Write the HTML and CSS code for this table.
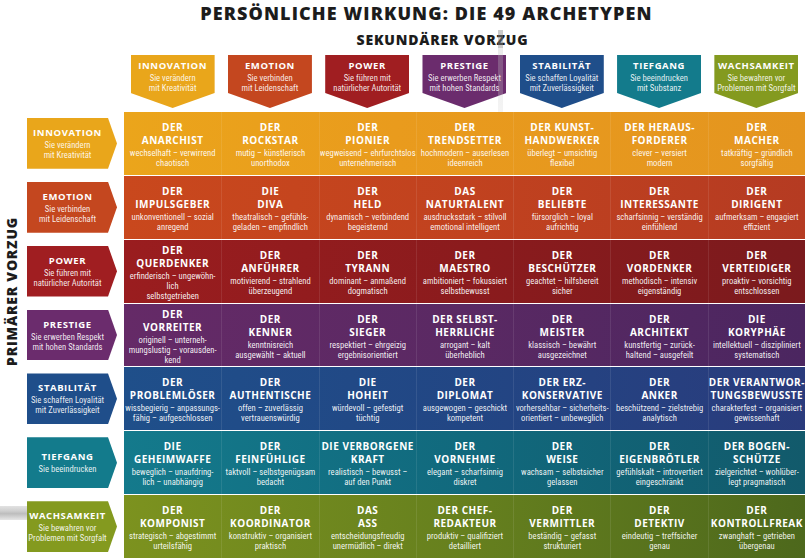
FILE: index.html
```html
<!DOCTYPE html>
<html lang="de">
<head>
<meta charset="utf-8">
<title>Persönliche Wirkung: Die 49 Archetypen</title>
<link rel="stylesheet" href="styles.css">
</head>
<body>
<div class="page">
  <h1 class="title">PERSÖNLICHE WIRKUNG: DIE 49 ARCHETYPEN</h1>
  <div class="subhead">SEKUNDÄRER VORZUG</div>

  <div class="colheads">
    <div class="colhead inn"><b>INNOVATION</b><span>Sie verändern<br>mit Kreativität</span></div>
    <div class="colhead emo"><b>EMOTION</b><span>Sie verbinden<br>mit Leidenschaft</span></div>
    <div class="colhead pow"><b>POWER</b><span>Sie führen mit<br>natürlicher Autorität</span></div>
    <div class="colhead pre"><b>PRESTIGE</b><span>Sie erwerben Respekt<br>mit hohen Standards</span></div>
    <div class="colhead sta"><b>STABILITÄT</b><span>Sie schaffen Loyalität<br>mit Zuverlässigkeit</span></div>
    <div class="colhead tie"><b>TIEFGANG</b><span>Sie beeindrucken<br>mit Substanz</span></div>
    <div class="colhead wac"><b>WACHSAMKEIT</b><span>Sie bewahren vor<br>Problemen mit Sorgfalt</span></div>
  </div>

  <div class="main">
    <div class="sidelabel"><span>PRIMÄRER VORZUG</span></div>
    <div class="board">

      <div class="row">
        <div class="rowhead"><div class="arrow inn"><b>INNOVATION</b><span>Sie verändern<br>mit Kreativität</span></div></div>
        <div class="cells g-inn">
          <div class="cell"><b>DER</b><strong>ANARCHIST</strong><span>wechselhaft – verwirrend<br>chaotisch</span></div>
          <div class="cell"><b>DER</b><strong>ROCKSTAR</strong><span>mutig – künstlerisch<br>unorthodox</span></div>
          <div class="cell"><b>DER</b><strong>PIONIER</strong><span>wegweisend – ehrfurchtslos<br>unternehmerisch</span></div>
          <div class="cell"><b>DER</b><strong>TRENDSETTER</strong><span>hochmodern – auserlesen<br>ideenreich</span></div>
          <div class="cell"><b>DER KUNST-</b><strong>HANDWERKER</strong><span>überlegt – umsichtig<br>flexibel</span></div>
          <div class="cell"><b>DER HERAUS-</b><strong>FORDERER</strong><span>clever – versiert<br>modern</span></div>
          <div class="cell"><b>DER</b><strong>MACHER</strong><span>tatkräftig – gründlich<br>sorgfältig</span></div>
        </div>
      </div>

      <div class="row">
        <div class="rowhead"><div class="arrow emo"><b>EMOTION</b><span>Sie verbinden<br>mit Leidenschaft</span></div></div>
        <div class="cells g-emo">
          <div class="cell"><b>DER</b><strong>IMPULSGEBER</strong><span>unkonventionell – sozial<br>anregend</span></div>
          <div class="cell"><b>DIE</b><strong>DIVA</strong><span>theatralisch – gefühls-<br>geladen – empfindlich</span></div>
          <div class="cell"><b>DER</b><strong>HELD</strong><span>dynamisch – verbindend<br>begeisternd</span></div>
          <div class="cell"><b>DAS</b><strong>NATURTALENT</strong><span>ausdrucksstark – stilvoll<br>emotional intelligent</span></div>
          <div class="cell"><b>DER</b><strong>BELIEBTE</strong><span>fürsorglich – loyal<br>aufrichtig</span></div>
          <div class="cell"><b>DER</b><strong>INTERESSANTE</strong><span>scharfsinnig – verständig<br>einfühlend</span></div>
          <div class="cell"><b>DER</b><strong>DIRIGENT</strong><span>aufmerksam – engagiert<br>effizient</span></div>
        </div>
      </div>

      <div class="row">
        <div class="rowhead"><div class="arrow pow"><b>POWER</b><span>Sie führen mit<br>natürlicher Autorität</span></div></div>
        <div class="cells g-pow">
          <div class="cell"><b>DER</b><strong>QUERDENKER</strong><span>erfinderisch – ungewöhn-<br>lich<br>selbstgetrieben</span></div>
          <div class="cell"><b>DER</b><strong>ANFÜHRER</strong><span>motivierend – strahlend<br>überzeugend</span></div>
          <div class="cell"><b>DER</b><strong>TYRANN</strong><span>dominant – anmaßend<br>dogmatisch</span></div>
          <div class="cell"><b>DER</b><strong>MAESTRO</strong><span>ambitioniert – fokussiert<br>selbstbewusst</span></div>
          <div class="cell"><b>DER</b><strong>BESCHÜTZER</strong><span>geachtet – hilfsbereit<br>sicher</span></div>
          <div class="cell"><b>DER</b><strong>VORDENKER</strong><span>methodisch – intensiv<br>eigenständig</span></div>
          <div class="cell"><b>DER</b><strong>VERTEIDIGER</strong><span>proaktiv – vorsichtig<br>entschlossen</span></div>
        </div>
      </div>

      <div class="row">
        <div class="rowhead"><div class="arrow pre"><b>PRESTIGE</b><span>Sie erwerben Respekt<br>mit hohen Standards</span></div></div>
        <div class="cells g-pre">
          <div class="cell"><b>DER</b><strong>VORREITER</strong><span>originell – unterneh-<br>mungslustig – vorausden-<br>kend</span></div>
          <div class="cell"><b>DER</b><strong>KENNER</strong><span>kenntnisreich<br>ausgewählt – aktuell</span></div>
          <div class="cell"><b>DER</b><strong>SIEGER</strong><span>respektiert – ehrgeizig<br>ergebnisorientiert</span></div>
          <div class="cell"><b>DER SELBST-</b><strong>HERRLICHE</strong><span>arrogant – kalt<br>überheblich</span></div>
          <div class="cell"><b>DER</b><strong>MEISTER</strong><span>klassisch – bewährt<br>ausgezeichnet</span></div>
          <div class="cell"><b>DER</b><strong>ARCHITEKT</strong><span>kunstfertig – zurück-<br>haltend – ausgefeilt</span></div>
          <div class="cell"><b>DIE</b><strong>KORYPHÄE</strong><span>intellektuell – diszipliniert<br>systematisch</span></div>
        </div>
      </div>

      <div class="row">
        <div class="rowhead"><div class="arrow sta"><b>STABILITÄT</b><span>Sie schaffen Loyalität<br>mit Zuverlässigkeit</span></div></div>
        <div class="cells g-sta">
          <div class="cell"><b>DER</b><strong>PROBLEMLÖSER</strong><span>wissbegierig – anpassungs-<br>fähig – aufgeschlossen</span></div>
          <div class="cell"><b>DER</b><strong>AUTHENTISCHE</strong><span>offen – zuverlässig<br>vertrauenswürdig</span></div>
          <div class="cell"><b>DIE</b><strong>HOHEIT</strong><span>würdevoll – gefestigt<br>tüchtig</span></div>
          <div class="cell"><b>DER</b><strong>DIPLOMAT</strong><span>ausgewogen – geschickt<br>kompetent</span></div>
          <div class="cell"><b>DER ERZ-</b><strong>KONSERVATIVE</strong><span>vorhersehbar – sicherheits-<br>orientiert – unbeweglich</span></div>
          <div class="cell"><b>DER</b><strong>ANKER</strong><span>beschützend – zielstrebig<br>analytisch</span></div>
          <div class="cell"><b>DER VERANTWOR-</b><strong>TUNGSBEWUSSTE</strong><span>charakterfest – organisiert<br>gewissenhaft</span></div>
        </div>
      </div>

      <div class="row">
        <div class="rowhead"><div class="arrow tie"><b>TIEFGANG</b><span>Sie beeindrucken</span></div></div>
        <div class="cells g-tie">
          <div class="cell"><b>DIE</b><strong>GEHEIMWAFFE</strong><span>beweglich – unaufdring-<br>lich – unabhängig</span></div>
          <div class="cell"><b>DER</b><strong>FEINFÜHLIGE</strong><span>taktvoll – selbstgenügsam<br>bedacht</span></div>
          <div class="cell"><b>DIE VERBORGENE</b><strong>KRAFT</strong><span>realistisch – bewusst –<br>auf den Punkt</span></div>
          <div class="cell"><b>DER</b><strong>VORNEHME</strong><span>elegant – scharfsinnig<br>diskret</span></div>
          <div class="cell"><b>DER</b><strong>WEISE</strong><span>wachsam – selbstsicher<br>gelassen</span></div>
          <div class="cell"><b>DER</b><strong>EIGENBRÖTLER</strong><span>gefühlskalt – introvertiert<br>eingeschränkt</span></div>
          <div class="cell"><b>DER BOGEN-</b><strong>SCHÜTZE</strong><span>zielgerichtet – wohlüber-<br>legt pragmatisch</span></div>
        </div>
      </div>

      <div class="row">
        <div class="rowhead"><div class="arrow wac"><b>WACHSAMKEIT</b><span>Sie bewahren vor<br>Problemen mit Sorgfalt</span></div></div>
        <div class="cells g-wac">
          <div class="cell"><b>DER</b><strong>KOMPONIST</strong><span>strategisch – abgestimmt<br>urteilsfähig</span></div>
          <div class="cell"><b>DER</b><strong>KOORDINATOR</strong><span>konstruktiv – organisiert<br>praktisch</span></div>
          <div class="cell"><b>DAS</b><strong>ASS</strong><span>entscheidungsfreudig<br>unermüdlich – direkt</span></div>
          <div class="cell"><b>DER CHEF-</b><strong>REDAKTEUR</strong><span>produktiv – qualifiziert<br>detailliert</span></div>
          <div class="cell"><b>DER</b><strong>VERMITTLER</strong><span>beständig – gefasst<br>strukturiert</span></div>
          <div class="cell"><b>DER</b><strong>DETEKTIV</strong><span>eindeutig – treffsicher<br>genau</span></div>
          <div class="cell"><b>DER</b><strong>KONTROLLFREAK</strong><span>zwanghaft – getrieben<br>übergenau</span></div>
        </div>
      </div>

    </div>
  </div>

  <div class="vbar"></div>
  <div class="pipe"></div>
</div>
</body>
</html>
```

FILE: styles.css
```css
* { box-sizing: border-box; }
html, body { margin: 0; padding: 0; background: #fff; }
body {
  width: 805px;
  height: 558px;
  overflow: hidden;
  font-family: "Open Sans", "DejaVu Sans", sans-serif;
  color: #fff;
}
.page { position: relative; width: 805px; height: 558px; }

.title {
  margin: 0;
  height: 28px;
  line-height: 27px;
  padding-left: 48px;
  text-align: center;
  font-size: 18px;
  font-weight: 800;
  letter-spacing: 1.1px;
  color: #1c1c1c;
}
.subhead {
  height: 24px;
  line-height: 24px;
  padding-left: 80px;
  text-align: center;
  font-size: 14px;
  font-weight: 800;
  letter-spacing: 0.8px;
  color: #1c1c1c;
}

/* column headers */
.colheads {
  display: grid;
  grid-template-columns: repeat(7, 1fr);
  margin-left: 124px;
  height: 60px;
  padding-top: 3px;
}
.colhead {
  justify-self: center;
  width: 84px;
  height: 53px;
  clip-path: polygon(0 0, 100% 0, 100% 38px, 50% 100%, 0 38px);
  display: flex;
  flex-direction: column;
  align-items: center;
  padding-top: 5px;
  text-align: center;
}
.colhead b, .arrow b {
  font-size: 9.5px;
  font-weight: 700;
  letter-spacing: 0.6px;
  line-height: 12px;
}
.colhead span, .arrow span {
  font-family: "Liberation Sans Narrow", "Roboto Condensed", "Roboto", sans-serif;
  font-size: 8.6px;
  line-height: 10px;
  margin-top: 1px;
  color: rgba(255,255,255,0.9);
  white-space: nowrap;
}

.inn { background: #e9a61b; }
.emo { background: #c4471f; }
.pow { background: #a01e21; }
.pre { background: #6b2c6d; }
.sta { background: #1f4e8a; }
.tie { background: #137b8c; }
.wac { background: #849a1f; }

/* main area */
.main {
  display: grid;
  grid-template-columns: 24px 1fr;
}
.sidelabel {
  height: 254px;
  display: flex;
  justify-content: flex-start;
  padding-left: 4px;
}
.sidelabel span {
  writing-mode: vertical-rl;
  transform: rotate(180deg);
  font-size: 14px;
  font-weight: 800;
  letter-spacing: 0.8px;
  color: #1c1c1c;
  line-height: 16px;
}

.board {
  display: flex;
  flex-direction: column;
  gap: 1px;
}
.row {
  display: grid;
  grid-template-columns: 100px 1fr;
  height: 62.86px;
}
.rowhead {
  padding: 6px 0 6px 3px;
  position: relative;
  z-index: 2;
}
.arrow {
  width: 90px;
  height: 100%;
  clip-path: polygon(0 0, 81px 0, 100% 50%, 81px 100%, 0 100%);
  padding-right: 9px;
  display: flex;
  flex-direction: column;
  align-items: center;
  justify-content: center;
  text-align: center;
}

.cells {
  display: grid;
  grid-template-columns: repeat(7, 1fr);
}
.g-inn { background: linear-gradient(90deg, #eba51b, #e99b1d 40%, #e4951f); }
.g-emo { background: linear-gradient(90deg, #c9481d, #c1421f 50%, #b53b22); }
.g-pow { background: linear-gradient(90deg, #9a1d1f, #8b1b1d 50%, #7b1a1d); }
.g-pre { background: linear-gradient(90deg, #652a67, #5a2963 50%, #4b2660); }
.g-sta { background: linear-gradient(90deg, #1f4f8a, #224684 50%, #2a3b7c); }
.g-tie { background: linear-gradient(90deg, #147a8c, #11697d 50%, #125a6b); }
.g-wac { background: linear-gradient(90deg, #7c921f, #66801e 50%, #4d681c); }

.cell {
  display: flex;
  flex-direction: column;
  align-items: center;
  justify-content: center;
  text-align: center;
  border-left: 1px solid rgba(255,255,255,0.09);
  padding-top: 2px;
  overflow: hidden;
}
.cell:first-child { border-left: 0; }
.cell b, .cell strong {
  font-size: 10px;
  font-weight: 700;
  letter-spacing: 0.5px;
  line-height: 13px;
  white-space: nowrap;
}
.cell span {
  font-family: "Liberation Sans Narrow", "Roboto Condensed", "Roboto", sans-serif;
  font-size: 8.6px;
  line-height: 10px;
  color: rgba(255,255,255,0.93);
  white-space: nowrap;
  margin-top: 1px;
}

/* scan artefacts lying over the page */
.vbar {
  position: absolute;
  left: 498px;
  top: 30px;
  width: 5px;
  height: 82px;
  background: linear-gradient(180deg, rgba(140,140,140,0.45) 0, rgba(140,140,140,0.45) 18px, rgba(190,190,190,0.3) 18px, rgba(210,210,210,0.25) 100%);
}
.pipe {
  position: absolute;
  left: 0;
  top: 506px;
  width: 30px;
  height: 14px;
  z-index: 1;
  background: linear-gradient(180deg, #e2e2e2 0, #cfcfcf 35%, #bdbdbd 55%, #e6e6e6 100%);
}
```
